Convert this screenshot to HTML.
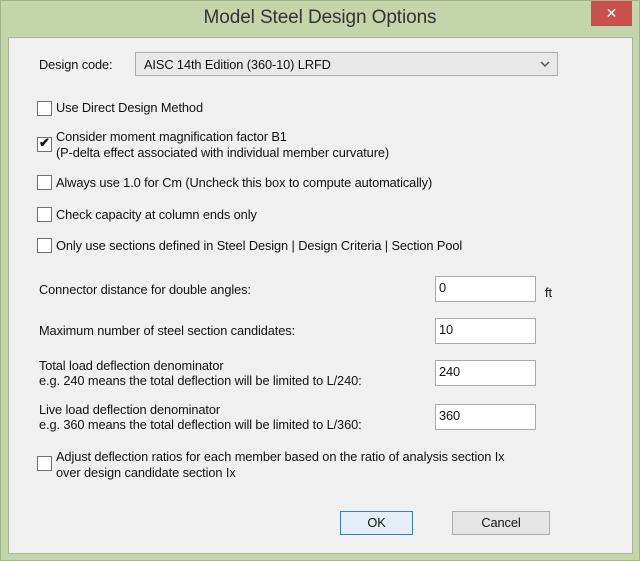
<!DOCTYPE html>
<html><head><style>
body{margin:0;width:640px;height:561px;background:#c4d5ac;position:relative;overflow:hidden;font-family:"Liberation Sans",sans-serif;font-size:12.8px;letter-spacing:-0.1px;color:#111}
.frame{position:absolute;left:0;top:0;width:638px;height:559px;border:1px solid #9fb48a;}
.title{position:absolute;left:0;top:7px;width:640px;text-align:center;font-size:19px;color:#333}
.close{position:absolute;left:591px;top:1px;width:41px;height:25px;background:#c9504c;color:#fff;text-align:center;font-size:14px;line-height:24px}
.client{position:absolute;left:8px;top:37px;width:623px;height:515px;background:#f0f0f0;border:1px solid #a6b493}
.a{position:absolute;white-space:nowrap}
.cb{position:absolute;width:13px;height:13px;border:1px solid #707070;background:#fff}
.tb{position:absolute;width:99px;height:24px;border:1px solid #aaa;background:#fff;left:435px}
.tb span{position:absolute;left:3px;top:3px}
.btn{position:absolute;height:22px;border:1px solid #acacac;background:#e5e5e5;text-align:center;line-height:22px}
</style></head><body>
<div class="frame"></div>
<div class="title">Model Steel Design Options</div>
<div class="close">✕</div>
<div class="client"></div>
<div class="a" style="left:39px;top:57px">Design code:</div>
<div class="a" style="left:135px;top:52px;width:421px;height:22px;border:1px solid #acacac;background:#e8e8e8"></div>
<div class="a" style="left:144px;top:57px">AISC 14th Edition (360-10) LRFD</div>
<svg class="a" style="left:540px;top:60px" width="10" height="8"><path d="M1 2 L5 6 L9 2" stroke="#555" stroke-width="1.5" fill="none"/></svg>
<div class="cb" style="left:37px;top:101px"></div><div class="a" style="left:56px;top:100px">Use Direct Design Method</div>
<div class="cb" style="left:37px;top:137px"></div><div class="a" style="left:39px;top:135px;font-size:13px;font-weight:bold">✔</div>
<div class="a" style="left:56px;top:129px;line-height:16px">Consider moment magnification factor B1<br>(P-delta effect associated with individual member curvature)</div>
<div class="cb" style="left:37px;top:175px"></div><div class="a" style="left:56px;top:175px">Always use 1.0 for Cm (Uncheck this box to compute automatically)</div>
<div class="cb" style="left:37px;top:207px"></div><div class="a" style="left:56px;top:207px">Check capacity at column ends only</div>
<div class="cb" style="left:37px;top:238px"></div><div class="a" style="left:56px;top:238px">Only use sections defined in Steel Design | Design Criteria | Section Pool</div>
<div class="a" style="left:39px;top:282px">Connector distance for double angles:</div>
<div class="tb" style="top:276px"><span>0</span></div><div class="a" style="left:545px;top:285px">ft</div>
<div class="a" style="left:39px;top:323px">Maximum number of steel section candidates:</div>
<div class="tb" style="top:318px"><span>10</span></div>
<div class="a" style="left:39px;top:358px;line-height:15px">Total load deflection denominator<br>e.g. 240 means the total deflection will be limited to L/240:</div>
<div class="tb" style="top:360px"><span>240</span></div>
<div class="a" style="left:39px;top:402px;line-height:15px">Live load deflection denominator<br>e.g. 360 means the total deflection will be limited to L/360:</div>
<div class="tb" style="top:404px"><span>360</span></div>
<div class="cb" style="left:37px;top:456px"></div>
<div class="a" style="left:56px;top:449px;line-height:16px">Adjust deflection ratios for each member based on the ratio of analysis section Ix<br>over design candidate section Ix</div>
<div class="btn" style="left:340px;top:511px;width:71px;border-color:#3c7fb1;background:#e5eef6">OK</div>
<div class="btn" style="left:452px;top:511px;width:96px">Cancel</div>
</body></html>
